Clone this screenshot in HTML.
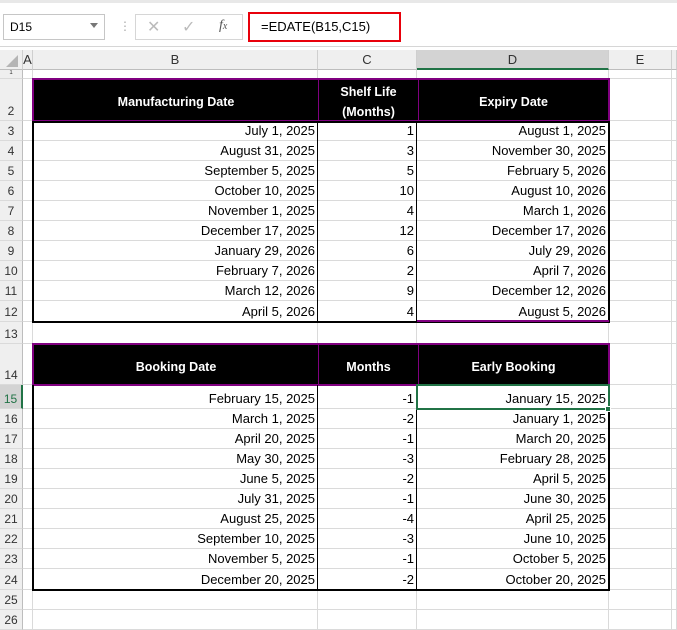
<!DOCTYPE html>
<html><head><style>
*{margin:0;padding:0;box-sizing:border-box}
body{width:677px;height:613px;overflow:hidden;background:#fff;font-family:"Liberation Sans",sans-serif;font-size:13px;position:relative;color:#000}
.abs{position:absolute}
table{position:absolute;left:0;top:50px;border-collapse:separate;border-spacing:0;table-layout:fixed}
td{border-right:1px solid #dadada;border-bottom:1px solid #dadada;padding:0 2px 2px 2px;vertical-align:bottom;text-align:right;white-space:nowrap;overflow:hidden}
td.rh{background:#efefef;border-right:1px solid #bdbdbd;text-align:center;color:#333;font-size:12px;padding:0 0 2px 0}
tr.ch td{background:#efefef;text-align:center;vertical-align:middle;color:#333;border-bottom:1px solid #bdbdbd;border-right:1px solid #cfcfcf;padding:0}
.hd{position:absolute;background:#000;border:2px solid #800080;color:#fff;font-weight:bold;font-size:12.5px}
.hd div{position:absolute;top:0;bottom:0;display:flex;align-items:center;justify-content:center;text-align:center;line-height:20px;padding-top:4px}
.box{position:absolute;border:2px solid #000}
.vl{position:absolute;width:1px;background:#000}
</style></head><body>
<div class="abs" style="left:0;top:0;width:677px;height:3px;background:#e8e8e8"></div>
<div class="abs" style="left:0;top:3px;width:677px;height:44px;background:#fff;border-bottom:1px solid #d6d6d6"></div>
<div class="abs" style="left:3px;top:14px;width:102px;height:26px;border:1px solid #c6c6c6;padding:5px 6px;font-size:12px">D15<span style="position:absolute;right:6px;top:8px;border-left:4px solid transparent;border-right:4px solid transparent;border-top:5px solid #777"></span></div>
<div class="abs" style="left:119px;top:19px;color:#aaa;font-size:12px">⋮</div>
<div class="abs" style="left:135px;top:14px;width:108px;height:26px;border:1px solid #d6d6d6"></div>
<div class="abs" style="left:147px;top:17px;color:#bbb;font-size:16px">✕</div>
<div class="abs" style="left:182px;top:17px;color:#bbb;font-size:16px">✓</div>
<div class="abs" style="left:219px;top:18px;color:#555;font-style:italic;font-family:'Liberation Serif',serif;font-size:14px">f<span style="font-size:10px">x</span></div>
<div class="abs" style="left:248px;top:12px;width:153px;height:30px;border:2px solid #e8000b;padding:5px 0 0 11px;font-size:13px">=EDATE(B15,C15)</div>

<table>
<colgroup><col style="width:23px"><col style="width:10px"><col style="width:285px"><col style="width:99px"><col style="width:192px"><col style="width:63px"><col style="width:5px"></colgroup>
<tr class="ch" style="height:20px"><td style="background:#efefef"></td><td>A</td><td>B</td><td>C</td><td style="background:#d3d3d3;border-bottom:2px solid #217346">D</td><td>E</td><td></td></tr>
<tr style="height:9px"><td class="rh" style="font-size:6px">1</td><td></td><td></td><td></td><td></td><td></td><td></td></tr>
<tr style="height:42px"><td class="rh">2</td><td></td><td></td><td></td><td></td><td></td><td></td></tr>
<tr style="height:20px"><td class="rh">3</td><td></td><td>July 1, 2025</td><td>1</td><td>August 1, 2025</td><td></td><td></td></tr>
<tr style="height:20px"><td class="rh">4</td><td></td><td>August 31, 2025</td><td>3</td><td>November 30, 2025</td><td></td><td></td></tr>
<tr style="height:20px"><td class="rh">5</td><td></td><td>September 5, 2025</td><td>5</td><td>February 5, 2026</td><td></td><td></td></tr>
<tr style="height:20px"><td class="rh">6</td><td></td><td>October 10, 2025</td><td>10</td><td>August 10, 2026</td><td></td><td></td></tr>
<tr style="height:20px"><td class="rh">7</td><td></td><td>November 1, 2025</td><td>4</td><td>March 1, 2026</td><td></td><td></td></tr>
<tr style="height:20px"><td class="rh">8</td><td></td><td>December 17, 2025</td><td>12</td><td>December 17, 2026</td><td></td><td></td></tr>
<tr style="height:20px"><td class="rh">9</td><td></td><td>January 29, 2026</td><td>6</td><td>July 29, 2026</td><td></td><td></td></tr>
<tr style="height:20px"><td class="rh">10</td><td></td><td>February 7, 2026</td><td>2</td><td>April 7, 2026</td><td></td><td></td></tr>
<tr style="height:20px"><td class="rh">11</td><td></td><td>March 12, 2026</td><td>9</td><td>December 12, 2026</td><td></td><td></td></tr>
<tr style="height:21px"><td class="rh">12</td><td></td><td>April 5, 2026</td><td>4</td><td>August 5, 2026</td><td></td><td></td></tr>
<tr style="height:22px"><td class="rh">13</td><td></td><td></td><td></td><td></td><td></td><td></td></tr>
<tr style="height:41px"><td class="rh">14</td><td></td><td></td><td></td><td></td><td></td><td></td></tr>
<tr style="height:24px"><td class="rh" style="background:#d3d3d3;border-right:2px solid #217346;color:#217346">15</td><td></td><td>February 15, 2025</td><td>-1</td><td>January 15, 2025</td><td></td><td></td></tr>
<tr style="height:20px"><td class="rh">16</td><td></td><td>March 1, 2025</td><td>-2</td><td>January 1, 2025</td><td></td><td></td></tr>
<tr style="height:20px"><td class="rh">17</td><td></td><td>April 20, 2025</td><td>-1</td><td>March 20, 2025</td><td></td><td></td></tr>
<tr style="height:20px"><td class="rh">18</td><td></td><td>May 30, 2025</td><td>-3</td><td>February 28, 2025</td><td></td><td></td></tr>
<tr style="height:20px"><td class="rh">19</td><td></td><td>June 5, 2025</td><td>-2</td><td>April 5, 2025</td><td></td><td></td></tr>
<tr style="height:20px"><td class="rh">20</td><td></td><td>July 31, 2025</td><td>-1</td><td>June 30, 2025</td><td></td><td></td></tr>
<tr style="height:20px"><td class="rh">21</td><td></td><td>August 25, 2025</td><td>-4</td><td>April 25, 2025</td><td></td><td></td></tr>
<tr style="height:20px"><td class="rh">22</td><td></td><td>September 10, 2025</td><td>-3</td><td>June 10, 2025</td><td></td><td></td></tr>
<tr style="height:20px"><td class="rh">23</td><td></td><td>November 5, 2025</td><td>-1</td><td>October 5, 2025</td><td></td><td></td></tr>
<tr style="height:21px"><td class="rh">24</td><td></td><td>December 20, 2025</td><td>-2</td><td>October 20, 2025</td><td></td><td></td></tr>
<tr style="height:20px"><td class="rh">25</td><td></td><td></td><td></td><td></td><td></td><td></td></tr>
<tr style="height:20px"><td class="rh">26</td><td></td><td></td><td></td><td></td><td></td><td></td></tr>
</table>
<div class="abs" style="left:6px;top:55px;width:0;height:0;border-left:12px solid transparent;border-bottom:12px solid #b5b5b5"></div>

<div class="hd" style="left:32px;top:78px;width:578px;height:44px">
<div style="left:0;width:285px;border-right:1px solid #800080">Manufacturing Date</div>
<div style="left:285px;width:100px;border-right:1px solid #800080">Shelf Life<br>(Months)</div>
<div style="left:385px;width:189px">Expiry Date</div>
</div>
<div class="box" style="left:32px;top:121px;width:578px;height:202px"></div>
<div class="vl" style="left:317px;top:121px;height:201px"></div>
<div class="vl" style="left:416px;top:121px;height:201px"></div>
<div class="abs" style="left:417px;top:320px;width:192px;height:2px;background:#800080"></div>

<div class="hd" style="left:32px;top:343px;width:578px;height:43px">
<div style="left:0;width:285px;border-right:1px solid #800080">Booking Date</div>
<div style="left:285px;width:100px;border-right:1px solid #800080">Months</div>
<div style="left:385px;width:189px">Early Booking</div>
</div>
<div class="box" style="left:32px;top:385px;width:578px;height:206px;border-top:none"></div>
<div class="vl" style="left:317px;top:385px;height:205px"></div>
<div class="vl" style="left:416px;top:385px;height:205px"></div>
<div class="abs" style="left:416px;top:384px;width:194px;height:26px;border:2px solid #217346"></div>
<div class="abs" style="left:605px;top:406px;width:6px;height:6px;background:#217346;border:1px solid #fff"></div>
</body></html>
